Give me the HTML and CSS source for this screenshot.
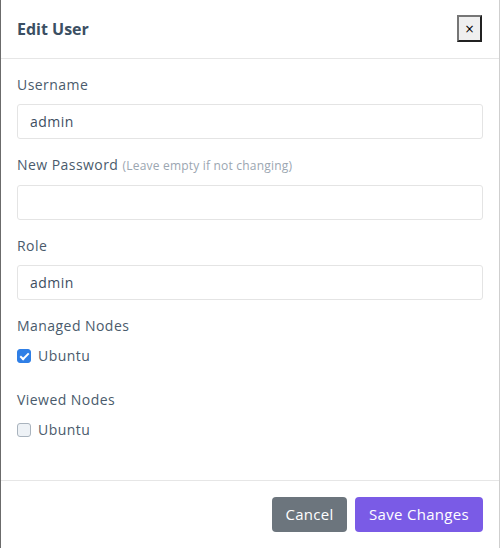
FILE: index.html
```html
<!DOCTYPE html>
<html>
<head>
<meta charset="utf-8">
<link rel="stylesheet" href="styles.css">
</head>
<body>
<div class="modal">
  <div class="modal-header">
    <h5 class="modal-title">Edit User</h5>
    <button class="close-btn" type="button">×</button>
  </div>
  <div class="modal-body">
    <div class="field">
      <label class="form-label">Username</label>
      <input class="form-control" type="text" value="admin">
    </div>
    <div class="field">
      <label class="form-label">New Password <small class="hint">(Leave empty if not changing)</small></label>
      <input class="form-control" type="password" value="">
    </div>
    <div class="field">
      <label class="form-label">Role</label>
      <input class="form-control" type="text" value="admin">
    </div>
    <div class="field field-check">
      <label class="form-label">Managed Nodes</label>
      <label class="check"><input type="checkbox" class="check-input" checked><span>Ubuntu</span></label>
    </div>
    <div class="field field-check">
      <label class="form-label">Viewed Nodes</label>
      <label class="check"><input type="checkbox" class="check-input"><span>Ubuntu</span></label>
    </div>
  </div>
  <div class="modal-footer">
    <button class="btn btn-secondary" type="button">Cancel</button>
    <button class="btn btn-primary" type="button">Save Changes</button>
  </div>
</div>
</body>
</html>
```
FILE: styles.css
```css
* { box-sizing: border-box; }
html, body { margin: 0; padding: 0; background: #fff; }
body {
  font-family: "Open Sans", "Liberation Sans", sans-serif;
  font-size: 14px;
  line-height: 1.5;
  letter-spacing: 0.45px;
  color: #4a5b6c;
}
.modal {
  width: 500px;
  height: 548px;
  border-left: 1px solid #6b6b6b;
  border-right: 1px solid #cfcfcf;
  display: flex;
  flex-direction: column;
}
.modal-header {
  display: flex;
  align-items: center;
  justify-content: space-between;
  padding: 15px 16px 16px 16px;
  border-bottom: 1px solid #e6e6e6;
  height: 60px;
}
.modal-title {
  margin: 0;
  font-size: 16px;
  font-weight: 700;
  letter-spacing: 0;
  color: #3b4f63;
}
.close-btn {
  width: 25px;
  height: 27px;
  padding: 0;
  margin-right: 1px;
  background: #efefef;
  border: 2px outset #767676;
  font-size: 12px;
  line-height: 1;
  letter-spacing: 0;
  color: #000;
  font-family: "DejaVu Sans", sans-serif;
}
.modal-body {
  padding: 16px 16px 16px 16px;
  flex: 1;
}
.field { margin-bottom: 16px; }
.field-check { margin-bottom: 24px; }
.form-label {
  display: block;
  line-height: 19px;
  padding-bottom: 2px;
  margin-bottom: 8px;
  color: #4a5b6c;
}
.hint {
  font-size: 12px;
  letter-spacing: 0.2px;
  color: #9ba6b1;
}
.form-control {
  display: block;
  width: 100%;
  height: 35px;
  padding: 6px 12px;
  font: inherit;
  letter-spacing: 0.45px;
  color: #3d4e5f;
  border: 1px solid #e4e4e4;
  border-radius: 3px;
  background: #fff;
}
.check {
  display: flex;
  align-items: center;
  gap: 7px;
  color: #4a5b6c;
}
.check-input {
  appearance: none;
  -webkit-appearance: none;
  margin: 0;
  width: 14px;
  height: 14px;
  border: 1px solid #a9b3bd;
  border-radius: 3px;
  background: #eef2f6;
  position: relative;
}
.check-input:checked {
  background: #2f7fe6;
  border-color: #2f7fe6;
}
.check-input:checked::after {
  content: "";
  position: absolute;
  left: 4px;
  top: 1.5px;
  width: 3px;
  height: 7px;
  border: solid #fff;
  border-width: 0 2px 2px 0;
  transform: rotate(45deg);
}
.modal-footer {
  display: flex;
  justify-content: flex-end;
  gap: 8px;
  padding: 16px 16px 16px 16px;
  border-top: 1px solid #e6e6e6;
}
.btn {
  height: 35px;
  padding: 0;
  line-height: 31px;
  font: inherit;
  font-size: 15px;
  line-height: 31px;
  letter-spacing: 0.3px;
  color: #fff;
  border: 1px solid transparent;
  border-radius: 4px;
  text-align: center;
}
.btn-secondary { background: #6c757d; width: 75px; }
.btn-primary { background: #7a5be6; width: 128px; }
```
